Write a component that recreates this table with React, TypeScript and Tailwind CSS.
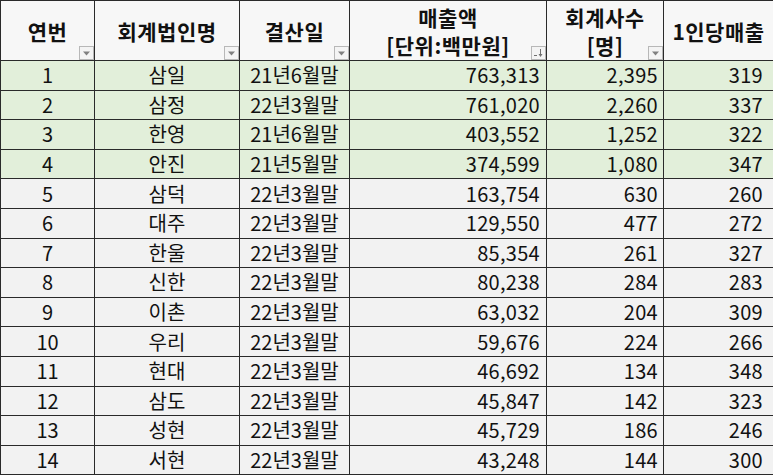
import React from "react";

type Row = { no: number; name: string; date: string; sales: string; cpa: string; per: string };

const ROWS: Row[] = [
  { no: 1, name: "삼일", date: "21년6월말", sales: "763,313", cpa: "2,395", per: "319" },
  { no: 2, name: "삼정", date: "22년3월말", sales: "761,020", cpa: "2,260", per: "337" },
  { no: 3, name: "한영", date: "21년6월말", sales: "403,552", cpa: "1,252", per: "322" },
  { no: 4, name: "안진", date: "21년5월말", sales: "374,599", cpa: "1,080", per: "347" },
  { no: 5, name: "삼덕", date: "22년3월말", sales: "163,754", cpa: "630", per: "260" },
  { no: 6, name: "대주", date: "22년3월말", sales: "129,550", cpa: "477", per: "272" },
  { no: 7, name: "한울", date: "22년3월말", sales: "85,354", cpa: "261", per: "327" },
  { no: 8, name: "신한", date: "22년3월말", sales: "80,238", cpa: "284", per: "283" },
  { no: 9, name: "이촌", date: "22년3월말", sales: "63,032", cpa: "204", per: "309" },
  { no: 10, name: "우리", date: "22년3월말", sales: "59,676", cpa: "224", per: "266" },
  { no: 11, name: "현대", date: "22년3월말", sales: "46,692", cpa: "134", per: "348" },
  { no: 12, name: "삼도", date: "22년3월말", sales: "45,847", cpa: "142", per: "323" },
  { no: 13, name: "성현", date: "22년3월말", sales: "45,729", cpa: "186", per: "246" },
  { no: 14, name: "서현", date: "22년3월말", sales: "43,248", cpa: "144", per: "300" },
];

// ─── 필터 버튼 ───────────────────────────────────────────────────────────────

function FilterButton({ sorted = false }: { sorted?: boolean }) {
  return (
    <span className="absolute bottom-0 right-0 flex h-[14px] w-[15px] items-center justify-center border border-[#b8b8b8] bg-[#f4f4f4]">
      {sorted ? (
        <svg width="11" height="10" viewBox="0 0 11 10">
          <rect x="1" y="7" width="3" height="1" fill="#707070" />
          <rect x="7" y="1" width="1" height="7" fill="#707070" />
          <path d="M5.5 6 L9.5 6 L7.5 9 Z" fill="#707070" />
        </svg>
      ) : (
        <svg width="9" height="5" viewBox="0 0 9 5">
          <path d="M1 0.5 L8 0.5 L4.5 4.5 Z" fill="#808080" />
        </svg>
      )}
    </span>
  );
}

function HeadCell({ children, filter, sorted }: { children: React.ReactNode; filter?: boolean; sorted?: boolean }) {
  return (
    <th className="relative border border-[#2a2a2a] p-0 text-center align-middle text-[21px] font-bold leading-[28px] tracking-[0.5px]">
      {children}
      {filter && <FilterButton sorted={sorted} />}
    </th>
  );
}

// ─── 메인 ─────────────────────────────────────────────────────────────────────

export default function App() {
  return (
    <div
      className="h-[476px] w-[773px] overflow-hidden bg-white text-[20px] text-[#111]"
      style={{ fontFamily: '"Noto Sans CJK KR", "Noto Sans", sans-serif' }}
    >
      <table className="w-[773px] table-fixed border-collapse">
        <colgroup>
          <col className="w-[94px]" />
          <col className="w-[145px]" />
          <col className="w-[110px]" />
          <col className="w-[197px]" />
          <col className="w-[117px]" />
          <col className="w-[110px]" />
        </colgroup>
        <thead>
          <tr className="h-[60px] bg-[#f7f7f7]">
            <HeadCell filter>연번</HeadCell>
            <HeadCell filter>회계법인명</HeadCell>
            <HeadCell filter>결산일</HeadCell>
            <HeadCell filter sorted>
              매출액
              <br />
              [단위:백만원]
            </HeadCell>
            <HeadCell filter>
              회계사수
              <br />
              [명]
            </HeadCell>
            <HeadCell>1인당매출</HeadCell>
          </tr>
        </thead>
        <tbody>
          {ROWS.map((r) => (
            <tr key={r.no} className={`h-[29.6px] ${r.no <= 4 ? "bg-[#e2efda]" : "bg-[#f2f2f2]"}`}>
              <td className="border border-[#2a2a2a] p-0 text-center leading-none">{r.no}</td>
              <td className="border border-[#2a2a2a] p-0 text-center leading-none">{r.name}</td>
              <td className="border border-[#2a2a2a] p-0 text-center leading-none">{r.date}</td>
              <td className="border border-[#2a2a2a] p-0 pr-[6px] text-right leading-none tracking-[0.3px]">{r.sales}</td>
              <td className="border border-[#2a2a2a] p-0 pr-[5px] text-right leading-none tracking-[0.3px]">{r.cpa}</td>
              <td className="border border-[#2a2a2a] p-0 pr-[10px] text-right leading-none tracking-[0.3px]">{r.per}</td>
            </tr>
          ))}
        </tbody>
      </table>
    </div>
  );
}
